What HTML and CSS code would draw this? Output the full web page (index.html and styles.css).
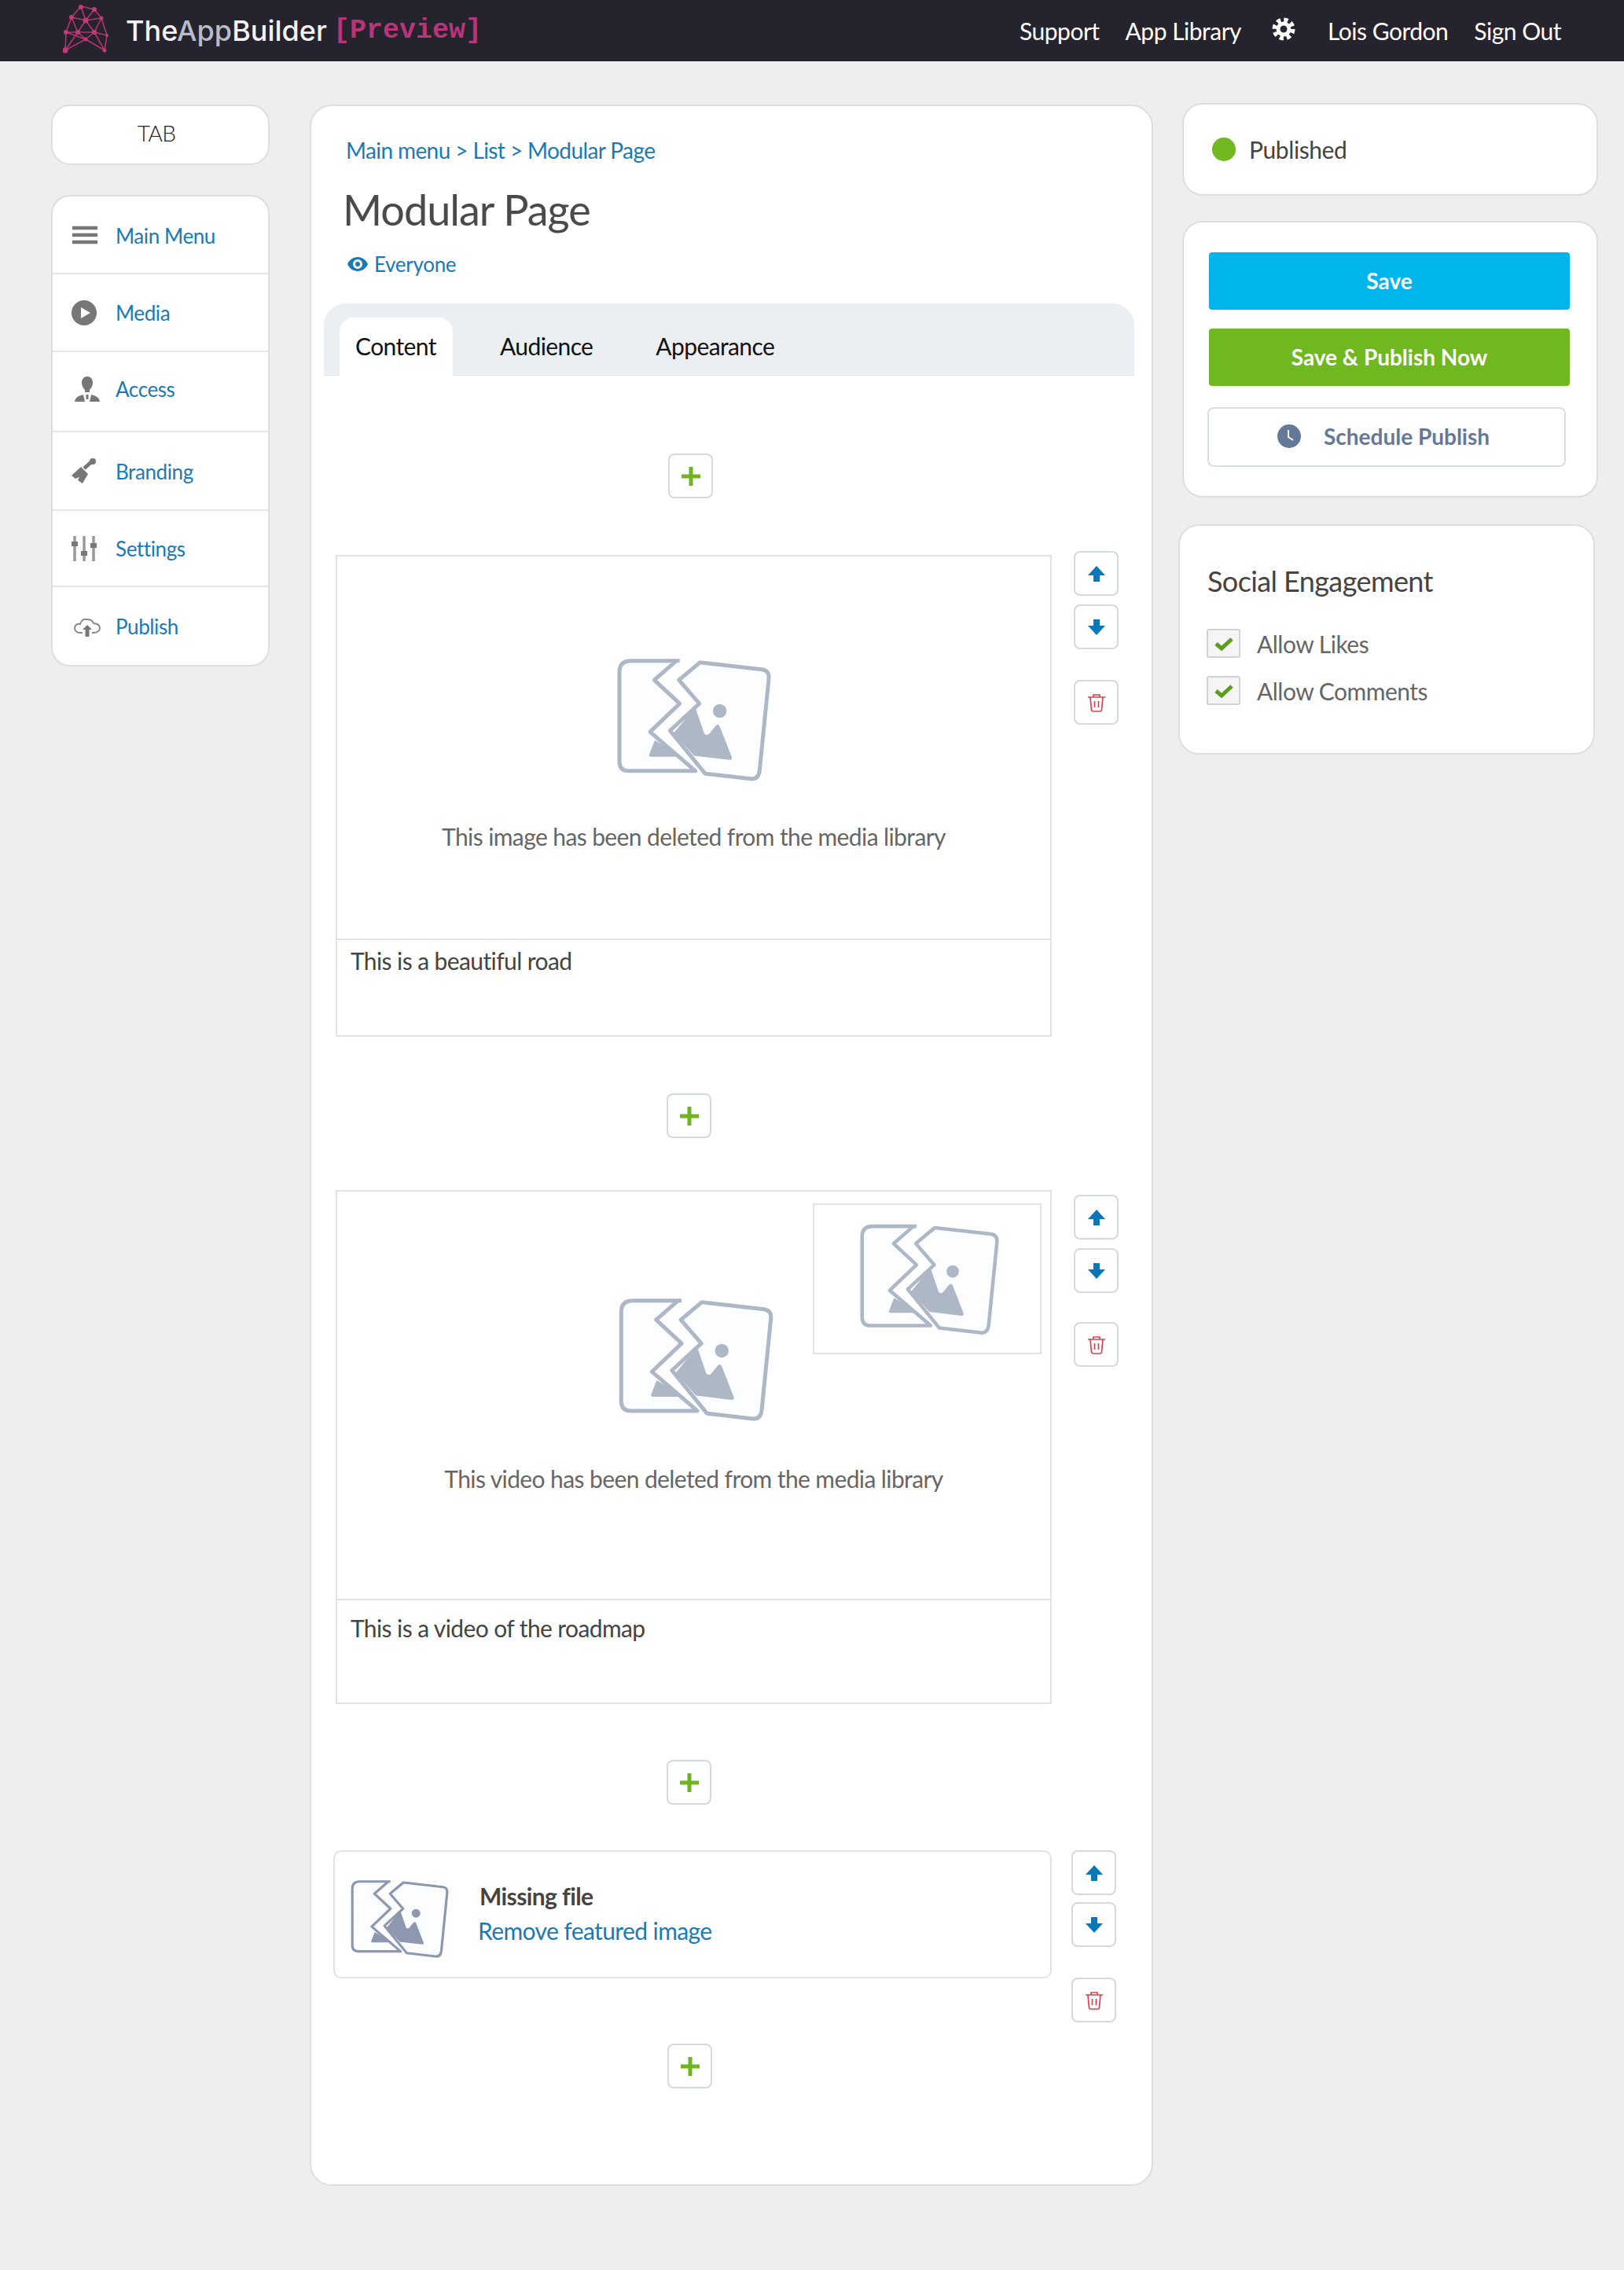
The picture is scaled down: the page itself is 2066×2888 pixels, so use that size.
FILE: index.html
```html
<!DOCTYPE html>
<html lang="en">
<head>
    <meta charset="UTF-8">
    <meta name="viewport" content="width=device-width, initial-scale=1.0">
    <title>Modular Page</title>
    <link rel="stylesheet" href="styles.css">
</head>
<body>
    <!-- shared icons -->
    <svg class="defs" width="0" height="0">
        <symbol id="broken" viewBox="130 105 600 485">
            <path class="broken-fill" d="M190 122H360L278 195L375 285L262 393L420 542H180Q145 542 145 505V165Q145 122 190 122Z"/>
            <path class="broken-fill" d="M452 128L690 155Q718 160 715 190L680 540Q676 575 645 572L472 552L338 388L450 285L372 195Z"/>
            <path class="broken-line" d="M375 122H190Q145 122 145 165V505Q145 542 180 542H435L262 393L375 285L278 195L362 122"/>
            <path class="broken-line" d="M452 128L690 155Q718 160 715 190L680 540Q676 575 645 572L472 552L338 388L450 285L372 195Z"/>
            <path class="broken-solid" d="M258 482L280 425L385 488H265Q258 488 258 482Z"/>
            <path class="broken-solid" d="M352 398L415 322L435 300L468 398Q476 410 488 400L512 370Q522 360 528 372L574 490Q576 500 565 500L430 484Z"/>
            <circle class="broken-solid" cx="528" cy="313" r="26"/>
        </symbol>
        <symbol id="arrow" viewBox="0 0 22 20">
            <path d="M11 0L22 12H15V20H7V12H0Z"/>
        </symbol>
        <symbol id="trash" viewBox="0 0 24 24">
            <path d="M1 5H23M8 5V2H16V5M4 5L5.500 21Q5.700 23 8 23H16Q18.300 23 18.500 21L20 5M9.500 10V18M14.500 10V18" fill="none" stroke="#d8434f" stroke-width="1.700"/>
        </symbol>
        <symbol id="plus" viewBox="0 0 24 24">
            <path d="M9.500 0H14.500V9.500H24V14.500H14.500V24H9.500V14.500H0V9.500H9.500Z"/>
        </symbol>
    </svg>

    <header class="topbar">
        <div class="brand">
            <svg class="brand-mark" viewBox="0 0 58 62" width="58" height="62">
                <g stroke="#b5336f" stroke-width="1.600" fill="none">
                    <path d="M23 2L40 6L49 17L56 39L53 58L29 44L3 58L4 35L11 16Z"/>
                    <path d="M23 2L29 20L40 6M11 16L29 20L49 17M4 35H19H40L56 39M11 16L19 35L29 20L40 35L49 17M3 58L19 35L29 44L40 35L53 58M4 35L29 44"/>
                </g>
                <g fill="#c23a7a">
                    <circle cx="23" cy="3" r="3"/><circle cx="40" cy="6" r="3"/><circle cx="11" cy="16" r="3"/>
                    <circle cx="29" cy="20" r="3.500"/><circle cx="49" cy="17" r="2.500"/><circle cx="4" cy="35" r="3"/>
                    <circle cx="19" cy="35" r="3"/><circle cx="40" cy="35" r="3"/><circle cx="56" cy="39" r="2"/>
                    <circle cx="29" cy="44" r="2.500"/><circle cx="3" cy="58" r="3.500"/><circle cx="53" cy="58" r="2.500"/>
                </g>
            </svg>
            <span class="brand-name">The<span class="brand-soft">App</span>Builder</span>
            <span class="brand-tag">[Preview]</span>
        </div>
        <nav class="topnav">
            <a>Support</a>
            <a>App Library</a>
            <svg class="gear" viewBox="0 0 30 30" width="30" height="30">
                <circle cx="15" cy="15" r="11.500" fill="none" stroke="#fff" stroke-width="6" stroke-dasharray="5.030 4"/>
                <circle cx="15" cy="15" r="7" fill="none" stroke="#fff" stroke-width="5"/>
            </svg>
            <a>Lois Gordon</a>
            <a>Sign Out</a>
        </nav>
    </header>

    <div class="layout">
        <aside class="sidebar">
            <div class="tab-card">TAB</div>
            <ul class="side-menu">
                <li>
                    <svg viewBox="0 0 34 34" width="34" height="34"><path d="M2 7H34M2 16H34M2 25H34" stroke="#777" stroke-width="4.500"/></svg>
                    <a>Main Menu</a>
                </li>
                <li>
                    <svg viewBox="0 0 34 34" width="34" height="34"><circle cx="17" cy="17" r="16" fill="#777"/><path d="M13 10L25 17L13 24Z" fill="#fff"/></svg>
                    <a>Media</a>
                </li>
                <li>
                    <svg viewBox="0 0 34 34" width="34" height="34"><path d="M17 1C12 1 10 5 10 9C10 13 12 16 14 18V21H20V18C22 16 24 13 24 9C24 5 22 1 17 1Z" fill="#777"/><path d="M1 33C2 27 6 26 12 24L14 33ZM33 33C32 27 28 26 22 24L20 33ZM15.500 24H18.500V30H15.500Z" fill="#777"/></svg>
                    <a>Access</a>
                </li>
                <li>
                    <svg viewBox="0 0 34 34" width="34" height="34"><path d="M1 22L13 11L22 20L15 32L9 28L11 24L6 26Z" fill="#777"/><path d="M17 13L27 4" stroke="#777" stroke-width="5"/><circle cx="28" cy="4" r="4" fill="#777"/></svg>
                    <a>Branding</a>
                </li>
                <li>
                    <svg viewBox="0 0 34 34" width="34" height="34"><path d="M5 1V33M17 1V33M29 1V33" stroke="#999" stroke-width="3.500"/><path d="M1 8H9V14H1ZM13 20H21V26H13ZM25 10H33V16H25Z" fill="#777"/></svg>
                    <a>Settings</a>
                </li>
                <li>
                    <svg viewBox="0 0 34 34" width="34" height="34"><path d="M11 25H8C3 25 1 22 1 19C1 15 5 13 8 14C9 9 13 7 17 8C21 8 24 10 25 13C30 13 33 16 33 19C33 23 29 25 25 25H23" fill="none" stroke="#888" stroke-width="2"/><path d="M17 15L23 21H19.500V30H14.500V21H11Z" fill="#777"/></svg>
                    <a>Publish</a>
                </li>
            </ul>
        </aside>

        <main class="content-card">
            <div class="crumbs"><a>Main menu</a> &gt; <a>List</a> &gt; <a>Modular Page</a></div>
            <h1>Modular Page</h1>
            <div class="audience">
                <svg viewBox="0 0 26 18" width="26" height="18"><path fill-rule="evenodd" d="M13 0C19 0 24 4 26 9C24 14 19 18 13 18C7 18 2 14 0 9C2 4 7 0 13 0ZM13 3A6 6 0 1 0 13 15A6 6 0 1 0 13 3ZM13 6A3 3 0 1 1 13 12A3 3 0 1 1 13 6Z" fill="#1a7ab5"/></svg>
                <a>Everyone</a>
            </div>

            <div class="tabs">
                <a class="tab active">Content</a>
                <a class="tab">Audience</a>
                <a class="tab">Appearance</a>
            </div>

            <button class="icon-btn add first"><svg class="ico-plus"><use href="#plus"/></svg></button>

            <section class="block-row">
                <div class="block block-image">
                    <div class="block-media">
                        <svg class="broken-big"><use href="#broken"/></svg>
                        <p>This image has been deleted from the media library</p>
                    </div>
                    <div class="caption">This is a beautiful road</div>
                </div>
                <div class="controls">
                    <button class="icon-btn"><svg class="ico-arrow"><use href="#arrow"/></svg></button>
                    <button class="icon-btn"><svg class="ico-arrow down"><use href="#arrow"/></svg></button>
                    <button class="icon-btn remove"><svg class="ico-trash"><use href="#trash"/></svg></button>
                </div>
            </section>

            <button class="icon-btn add"><svg class="ico-plus"><use href="#plus"/></svg></button>

            <section class="block-row video-row">
                <div class="block block-video">
                    <div class="block-media">
                        <div class="thumb"><svg class="broken-mid"><use href="#broken"/></svg></div>
                        <svg class="broken-big"><use href="#broken"/></svg>
                        <p>This video has been deleted from the media library</p>
                    </div>
                    <div class="caption">This is a video of the roadmap</div>
                </div>
                <div class="controls">
                    <button class="icon-btn"><svg class="ico-arrow"><use href="#arrow"/></svg></button>
                    <button class="icon-btn"><svg class="ico-arrow down"><use href="#arrow"/></svg></button>
                    <button class="icon-btn remove"><svg class="ico-trash"><use href="#trash"/></svg></button>
                </div>
            </section>

            <button class="icon-btn add after-video"><svg class="ico-plus"><use href="#plus"/></svg></button>

            <section class="block-row file-row">
                <div class="block block-file">
                    <svg class="broken-small"><use href="#broken"/></svg>
                    <div class="file-text">
                        <strong>Missing file</strong>
                        <a>Remove featured image</a>
                    </div>
                </div>
                <div class="controls">
                    <button class="icon-btn"><svg class="ico-arrow"><use href="#arrow"/></svg></button>
                    <button class="icon-btn"><svg class="ico-arrow down"><use href="#arrow"/></svg></button>
                    <button class="icon-btn remove"><svg class="ico-trash"><use href="#trash"/></svg></button>
                </div>
            </section>

            <button class="icon-btn add last"><svg class="ico-plus"><use href="#plus"/></svg></button>
        </main>

        <aside class="rightbar">
            <div class="panel status-panel">
                <span class="status-dot"></span>
                <span>Published</span>
            </div>
            <div class="panel action-panel">
                <button class="action save">Save</button>
                <button class="action publish">Save &amp; Publish Now</button>
                <button class="action schedule">
                    <svg viewBox="0 0 30 30" width="30" height="30"><circle cx="15" cy="15" r="15" fill="#64789a"/><path d="M14 7V16L20 20" fill="none" stroke="#fff" stroke-width="2"/></svg>
                    <span>Schedule Publish</span>
                </button>
            </div>
            <div class="panel social-panel">
                <h2>Social Engagement</h2>
                <label class="check-row">
                    <span class="check"><svg viewBox="0 0 24 18" width="24" height="18"><path d="M2 9L9 15L22 3" fill="none" stroke="#5a9e1c" stroke-width="5"/></svg></span>
                    Allow Likes
                </label>
                <label class="check-row">
                    <span class="check"><svg viewBox="0 0 24 18" width="24" height="18"><path d="M2 9L9 15L22 3" fill="none" stroke="#5a9e1c" stroke-width="5"/></svg></span>
                    Allow Comments
                </label>
            </div>
        </aside>
    </div>
</body>
</html>
```

FILE: styles.css
```css
* {
    box-sizing: border-box;
}
body {
    margin: 0;
    min-height: 2888px;
    background-color: #eeeeee;
    font-family: Lato, 'Open Sans', sans-serif;
    font-size: 30px;
    letter-spacing: -0.6px;
    color: #444;
}
a {
    color: #1a7ab5;
}
.defs {
    position: absolute;
}

/* broken image icon */
.broken-line {
    fill: none;
    stroke: var(--broken-color, #aeb7c6);
    stroke-width: 15;
    stroke-linejoin: round;
}
.broken-fill {
    fill: #fcfdfe;
}
.broken-solid {
    fill: var(--broken-color, #aeb7c6);
}

/* top bar */
.topbar {
    height: 78px;
    background-color: #24232e;
    display: flex;
    justify-content: space-between;
    align-items: center;
    padding: 0 80px 0 80px;
}
.brand {
    display: flex;
    align-items: center;
}
.brand-mark {
    margin-top: -4px;
}
.brand-name {
    font-family: Inter, sans-serif;
    font-size: 36px;
    font-weight: 500;
    letter-spacing: 0;
    color: #f4f4f6;
    margin-left: 22px;
}
.brand-soft {
    color: #b9bdcb;
}
.brand-tag {
    font-family: 'Liberation Mono', monospace;
    font-weight: bold;
    font-size: 35px;
    letter-spacing: 0;
    color: #b8357a;
    margin-left: 8px;
}
.topnav {
    display: flex;
    align-items: center;
    gap: 33px;
    letter-spacing: -0.5px;
}
.topnav a {
    color: #fff;
}
.gear {
    margin: -4px 8px 0 6px;
}

/* page columns */
.layout {
    display: flex;
    align-items: flex-start;
    padding: 55px 0 0 65px;
}
.sidebar {
    width: 278px;
}
.tab-card {
    height: 77px;
    padding-right: 10px;
    background-color: #fff;
    border: 2px solid #dedede;
    border-radius: 24px;
    text-align: center;
    line-height: 68px;
    font-size: 28px;
    font-weight: 300;
    color: #222;
}
.side-menu {
    list-style: none;
    margin: 38px 0 0;
    padding: 0;
    background-color: #fff;
    border: 2px solid #dedede;
    border-radius: 24px;
    font-size: 26px;
    letter-spacing: -0.4px;
}
.side-menu li {
    display: flex;
    align-items: center;
    gap: 23px;
    height: 99px;
    padding-left: 23px;
    border-bottom: 2px solid #e6e6e6;
}
.side-menu li:first-child {
    padding-top: 2px;
}
.side-menu li:nth-child(3) {
    height: 102px;
    padding-bottom: 6px;
}
.side-menu li:nth-child(4) {
    height: 100px;
    padding-top: 2px;
}
.side-menu li:nth-child(5) {
    height: 97px;
}
.side-menu li:last-child {
    height: 99px;
    border-bottom: none;
}
.side-menu li:nth-child(3) svg,
.side-menu li:last-child svg {
    margin: 0 -4px 0 4px;
}

/* main card */
.content-card {
    width: 1073px;
    height: 2648px;
    margin-left: 51px;
    padding: 38px 0 0 0;
    background-color: #fff;
    border: 2px solid #dedede;
    border-radius: 28px;
}
.crumbs {
    margin-left: 44px;
    font-size: 28px;
    line-height: 36px;
    color: #1a7ab5;
}
h1 {
    margin: 26px 0 0 40px;
    font-size: 54px;
    font-weight: 400;
    line-height: 64px;
    letter-spacing: -1px;
    color: #4a4a4a;
}
.audience {
    display: flex;
    align-items: center;
    gap: 8px;
    margin: 20px 0 0 46px;
    font-size: 26px;
    line-height: 34px;
    letter-spacing: -0.3px;
}
.tabs {
    display: flex;
    align-items: flex-end;
    width: 1031px;
    height: 92px;
    margin: 33px 0 0 16px;
    padding-left: 20px;
    background-color: #eceff2;
    border-bottom: 1px solid #e2e4e7;
    border-radius: 28px 28px 0 0;
    font-size: 30px;
    color: #111;
}
.tab {
    height: 74px;
    margin-bottom: -1px;
    padding: 18px 20px 0;
    color: #111;
    border-radius: 18px 18px 0 0;
}
.tab.active {
    width: 144px;
    background-color: #fff;
    margin-right: 40px;
}
.tab + .tab + .tab {
    margin-left: 40px;
}
.icon-btn {
    display: flex;
    align-items: center;
    justify-content: center;
    width: 57px;
    height: 57px;
    padding: 0;
    background-color: #fff;
    border: 2px solid #d4d9e0;
    border-radius: 8px;
}
.add {
    margin: 72px 0 0 452px;
}
.add.first {
    margin: 99px 0 0 454px;
}
.add.after-video {
    margin-top: 71px;
}
.add.last {
    margin: 27px 0 0 453px;
}
.ico-plus {
    width: 24px;
    height: 24px;
    fill: #6fb520;
}
.ico-arrow {
    width: 22px;
    height: 20px;
    fill: #0a77b8;
}
.ico-arrow.down {
    transform: rotate(180deg);
}
.ico-trash {
    width: 24px;
    height: 24px;
}

/* content blocks */
.block-row {
    display: flex;
    margin: 67px 0 0 31px;
}
.block {
    width: 911px;
    background-color: #fff;
    border: 2px solid #dfe2e6;
}
.block-image {
    height: 613px;
    margin-top: 5px;
}
.block-video {
    height: 654px;
}
.block-media {
    position: relative;
    height: 488px;
    padding-top: 127px;
    border-bottom: 2px solid #dfe2e6;
    text-align: center;
    color: #666;
}
.block-media p {
    margin: 47px 0 0;
    line-height: 40px;
}
.broken-big {
    display: block;
    width: 200px;
    height: 162px;
    margin: 0 0 0 354px;
}
.video-row {
    margin-top: 66px;
}
.block-video .block-media {
    height: 520px;
    padding-top: 133px;
}
.block-video .block-media p {
    margin-top: 50px;
}
.block-video .broken-big {
    width: 203px;
    margin-left: 355px;
}
.thumb {
    position: absolute;
    top: 15px;
    right: 11px;
    width: 291px;
    height: 192px;
    border: 2px solid #dfe2e6;
    padding: 22px 0 0 6px;
}
.broken-mid {
    width: 181px;
    height: 146px;
}
.caption {
    padding: 6px 17px;
    line-height: 40px;
}
.block-video .caption {
    padding-top: 15px;
}
.controls {
    display: flex;
    flex-direction: column;
    gap: 11px;
    margin-left: 28px;
}
.remove {
    margin-top: 28px;
}
.video-row .controls {
    margin-top: 6px;
}
.video-row .remove {
    margin-top: 26px;
}
.file-row {
    margin: 58px 0 0 28px;
}
.block-file {
    display: flex;
    width: 914px;
    height: 163px;
    border-radius: 10px;
    padding: 34px 0 0 19px;
}
.broken-small {
    --broken-color: #8d98b0;
    width: 127px;
    height: 103px;
}
.file-text {
    display: flex;
    flex-direction: column;
    margin-left: 36px;
}
.file-text strong {
    line-height: 40px;
    margin: 2px 0 0 2px;
}
.file-text a {
    line-height: 40px;
    margin-top: 4px;
}
.file-row .controls {
    margin-left: 25px;
}
.file-row .icon-btn:nth-child(2) {
    margin-top: -2px;
}

/* right column */
.rightbar {
    width: 533px;
    margin: -2px 0 0 32px;
}
.panel {
    width: 529px;
    margin-left: 5px;
    background-color: #fff;
    border: 2px solid #dedede;
    border-radius: 26px;
}
.status-panel {
    display: flex;
    align-items: center;
    gap: 17px;
    height: 118px;
    padding-left: 36px;
    margin-bottom: 32px;
    letter-spacing: -0.4px;
}
.status-dot {
    width: 30px;
    height: 30px;
    border-radius: 50%;
    background-color: #6fb81f;
}
.action-panel {
    height: 352px;
    padding: 38px 0 0 32px;
    margin-bottom: 34px;
}
.action {
    display: block;
    width: 459px;
    height: 73px;
    padding-bottom: 3px;
    border: none;
    border-radius: 4px;
    color: #fff;
    font-family: Lato, sans-serif;
    font-size: 28px;
    font-weight: bold;
}
.save {
    background-color: #00b5ec;
}
.publish {
    margin-top: 24px;
    background-color: #70b81f;
}
.schedule {
    display: flex;
    align-items: center;
    gap: 29px;
    width: 456px;
    height: 76px;
    margin: 27px 0 0 -2px;
    padding-left: 87px;
    background-color: #fff;
    border: 2px solid #d8dce3;
    border-radius: 8px;
    color: #64789a;
}
.social-panel {
    width: 530px;
    height: 293px;
    margin-left: 0;
    padding: 45px 0 0 35px;
}
h2 {
    margin: 0 0 36px;
    font-size: 36px;
    font-weight: 400;
    line-height: 50px;
    color: #444;
}
.check-row {
    display: flex;
    align-items: center;
    gap: 21px;
    height: 37px;
    margin: 0 0 23px -1px;
    letter-spacing: -0.5px;
    color: #666;
}
.check {
    display: flex;
    align-items: center;
    justify-content: center;
    width: 43px;
    height: 37px;
    background-color: #f5f5f5;
    border: 2px solid #d2d2d2;
    border-radius: 3px;
}
```
